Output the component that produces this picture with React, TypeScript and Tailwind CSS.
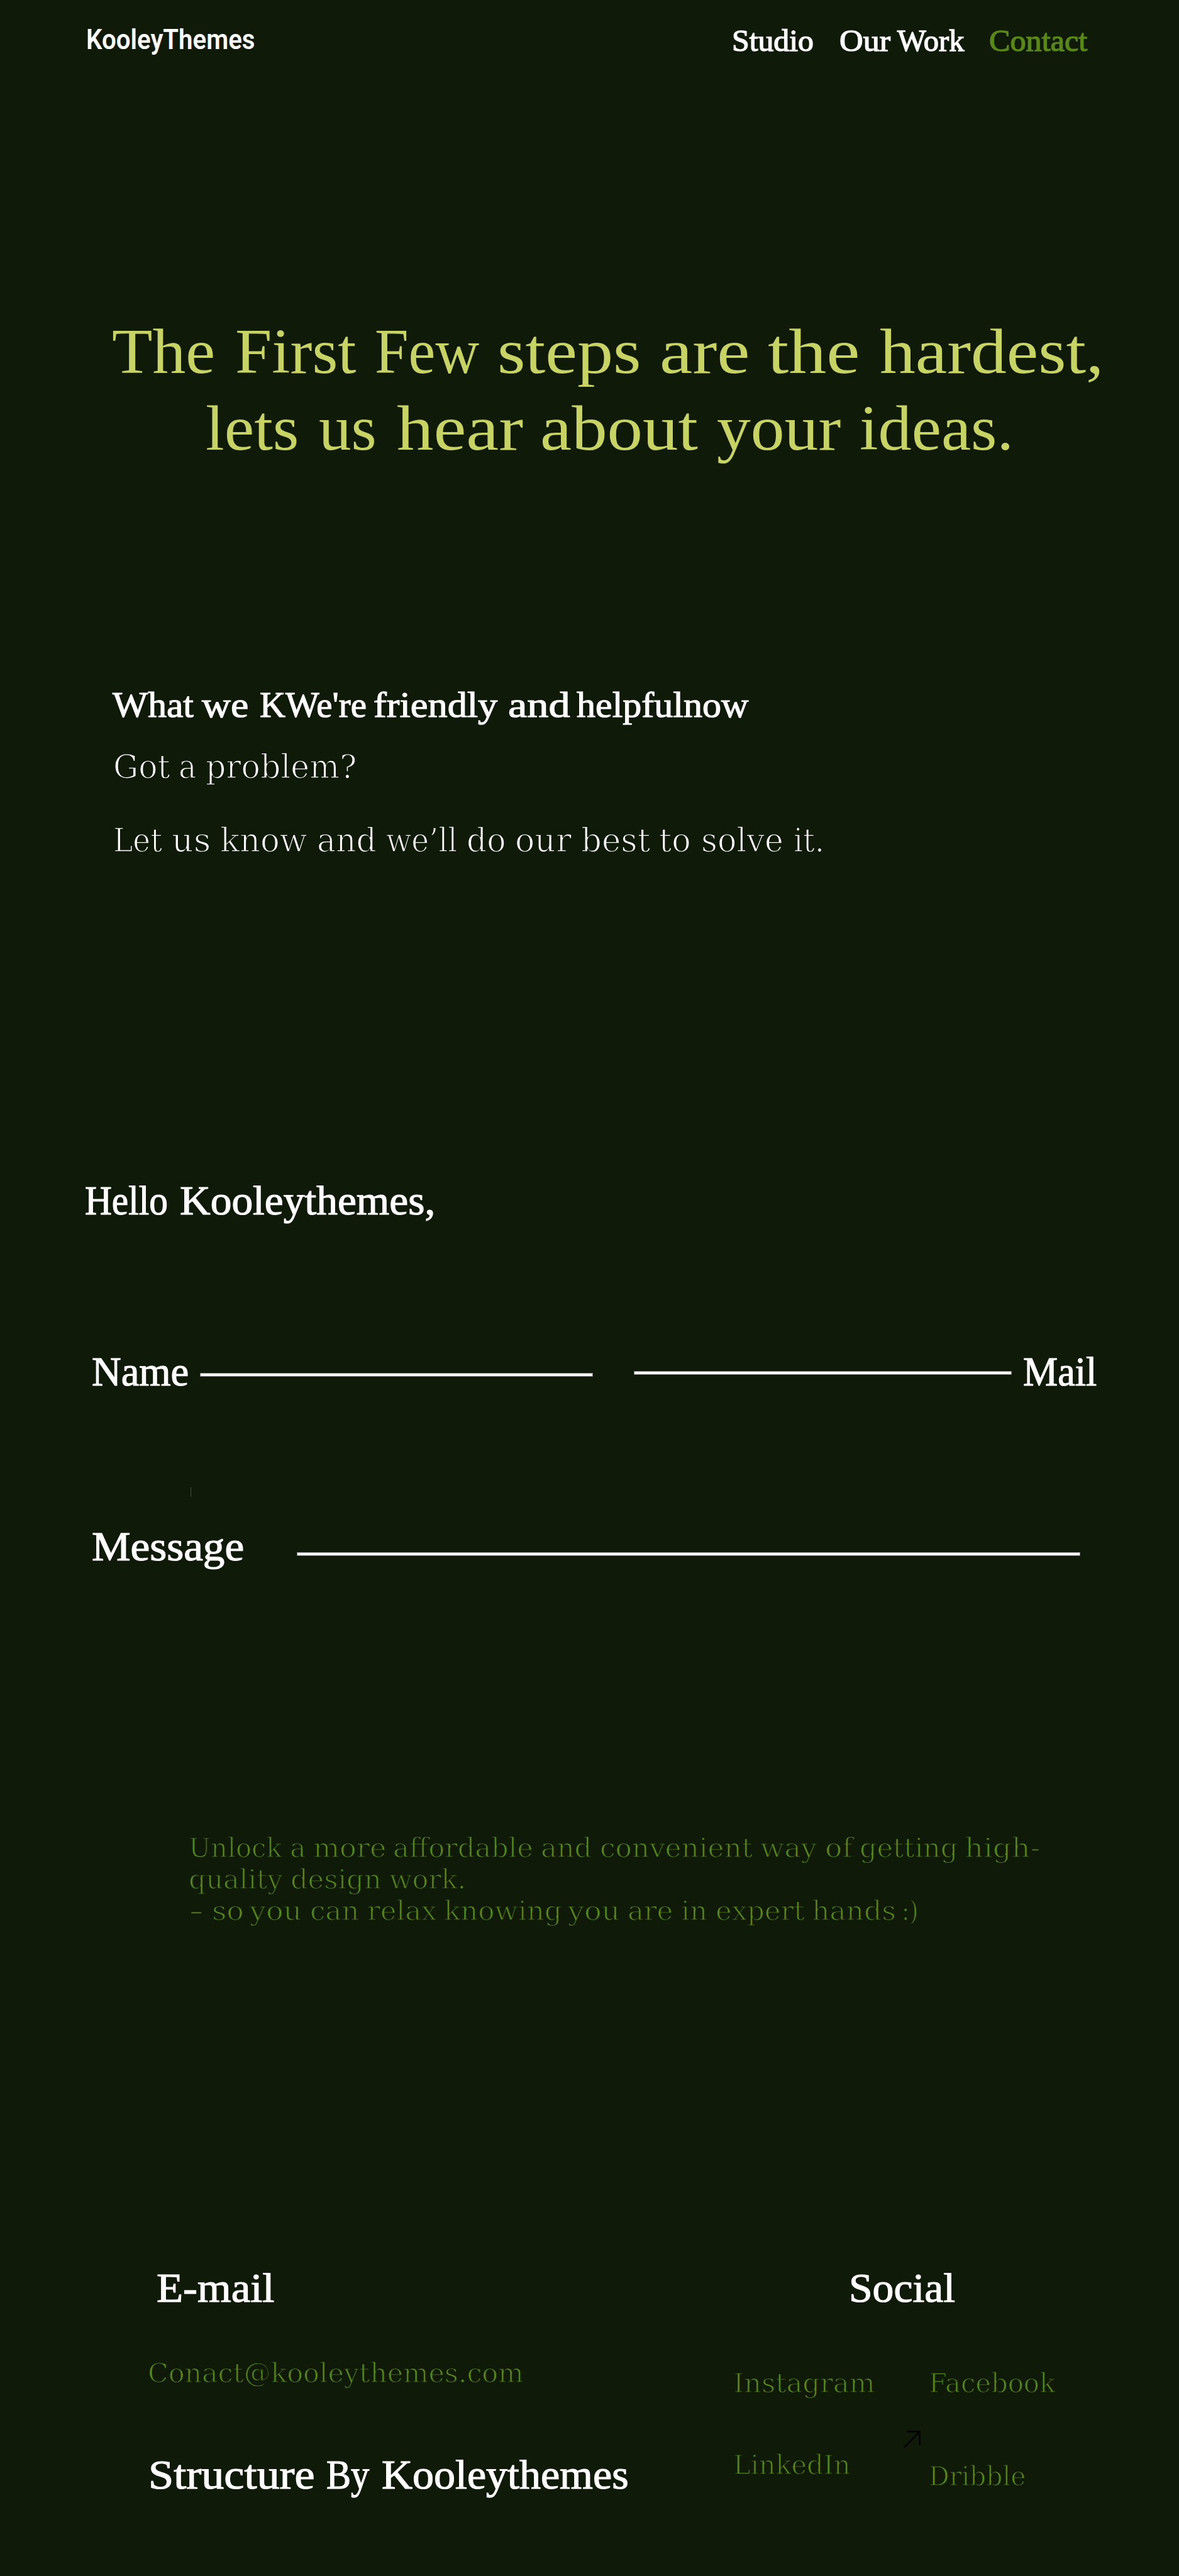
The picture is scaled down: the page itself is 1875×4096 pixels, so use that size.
import { Fragment, useLayoutEffect, useRef, useState } from "react";

/** A word stretched horizontally so that it fills the width of its box. */
function Fit({ text, width }: { text: string; width?: number }) {
  const box = useRef<HTMLSpanElement>(null);
  const inner = useRef<HTMLSpanElement>(null);
  const [scale, setScale] = useState(1);

  useLayoutEffect(() => {
    if (!box.current || !inner.current) return;
    const target = box.current.getBoundingClientRect().width;
    const natural = inner.current.getBoundingClientRect().width;
    if (natural > 0) setScale((s) => (target / natural) * s);
  }, [text, width]);

  return (
    <span
      ref={box}
      className="block w-full shrink-0"
      style={width ? { width } : undefined}
    >
      <span
        ref={inner}
        className="inline-block origin-left"
        style={{ transform: `scaleX(${scale})` }}
      >
        {text}
      </span>
    </span>
  );
}

/**
 * One line of text. `stops` lists the left and right edge of every word;
 * without it the whole line fills the width given by its class.
 */
function Line({
  text,
  className,
  stops,
}: {
  text: string;
  className: string;
  stops?: number[];
}) {
  if (!stops) {
    return (
      <span className={`block shrink-0 whitespace-nowrap ${className}`}>
        <Fit text={text} />
      </span>
    );
  }
  const words = text.split(" ");
  return (
    <span className={`flex shrink-0 whitespace-nowrap ${className}`}>
      {words.map((word, i) => (
        <Fragment key={i}>
          {i > 0 && (
            <span
              className="shrink-0"
              style={{ width: stops[i * 2] - stops[i * 2 - 1] - 2 }}
            >
              {" "}
            </span>
          )}
          <Fit text={word} width={stops[i * 2 + 1] - stops[i * 2] + 2} />
        </Fragment>
      ))}
    </span>
  );
}

const display = "font-['Liberation_Serif',serif]";
const nav = `${display} text-[50px] leading-[60px] [-webkit-text-stroke:1.4px_currentColor]`;
const title = `${display} text-[67px] leading-[80px] text-white [-webkit-text-stroke:1.2px_currentColor]`;
const slab = "font-['DejaVu_Serif',serif]";
const thin = "[-webkit-text-stroke:1.35px_#0f1a08]";
const link = `${slab} ${thin} text-[44px] leading-[60px] text-[#598817]`;
const rule = "h-[6.2px] shrink-0 border border-[#777] bg-white";

export default function App() {
  return (
    <div className="h-[4096px] w-full overflow-hidden bg-[#0f1a08]">
      <div className="w-[1920px] [zoom:0.9765625]">
        <header className="flex h-[100px] items-start pt-[35px] pl-[140px]">
          <Line
            text="KooleyThemes"
            className="w-[275px] font-['Roboto',sans-serif] text-[45px] leading-[60px] font-semibold text-white"
          />
          <nav className="mt-[2px] ml-[777px] flex gap-[42px]">
            <Line text="Studio" className={`${nav} w-[133px] text-white`} />
            <Line
              text="Our Work"
              stops={[1366, 1447, 1460, 1567]}
              className={`${nav} w-[202px] text-white`}
            />
            <Line text="Contact" className={`${nav} w-[160px] text-[#598817]`} />
          </nav>
        </header>

        <main>
          <h1
            className={`${display} pt-[410px] text-[104px] leading-[125px] text-[#c7d363]`}
          >
            <Line
              text="The First Few steps are the hardest,"
              stops={[
                183, 349, 384, 579, 611, 779, 811, 1043, 1075, 1220, 1251,
                1399, 1434, 1797,
              ]}
              className="ml-[182px]"
            />
            <Line
              text="lets us hear about your ideas."
              stops={[
                336, 486, 520, 612, 647, 851, 881, 1136, 1168, 1368, 1401,
                1650,
              ]}
              className="ml-[335px]"
            />
          </h1>

          <section className="mt-[352px] pl-[183px] text-white">
            <Line
              text="What we KWe're friendly and helpfulnow"
              stops={[
                183, 313, 329, 403, 423, 595, 608, 808, 827, 926, 939, 1217,
              ]}
              className={`${display} text-[59px] leading-[72px] [-webkit-text-stroke:1.2px_currentColor]`}
            />
            <div
              className={`${slab} mt-[5px] text-[53px] leading-[120px] [-webkit-text-stroke:1.6px_#0f1a08]`}
            >
              <Line
                text="Got a problem?"
                stops={[185, 276, 292, 319, 336, 580]}
                className="ml-px"
              />
              <Line
                text="Let us know and we’ll do our best to solve it."
                stops={[
                  185, 263, 281, 343, 359, 499, 517, 612, 630, 744, 761, 823,
                  840, 930, 947, 1058, 1074, 1124, 1143, 1275, 1293, 1341,
                ]}
                className="ml-px"
              />
            </div>
          </section>

          <section className="mt-[486px]">
            <Line
              text="Hello Kooleythemes,"
              stops={[139, 272, 294, 708]}
              className={`${title} ml-[138px]`}
            />
            <div className="mt-[198px] flex items-start pl-[150px]">
              <Line text="Name" className={`${title} w-[158px]`} />
              <div className={`${rule} mt-[42px] ml-[18px] w-[640px]`} />
              <div className={`${rule} mt-[39px] ml-[66px] w-[616px]`} />
              <Line text="Mail" className={`${title} ml-[18px] w-[120px]`} />
            </div>
            <div className="mt-[149px] ml-[310px] h-[15px] w-[1.1px] bg-[#4a4f46]" />
            <div className="mt-[41px] flex items-start pl-[149px]">
              <Line text="Message" className={`${title} w-[248px]`} />
              <div className={`${rule} mt-[49px] ml-[86px] w-[1276px]`} />
            </div>
          </section>

          <section
            className={`${slab} ${thin} mt-[426px] pl-[307px] text-[44px] leading-[51px] text-[#598817]`}
          >
            <Line
              text="Unlock a more affordable and convenient way of getting high-"
              stops={[
                308, 458, 473, 497, 511, 628, 641, 867, 882, 963, 978, 1225,
                1239, 1329, 1345, 1388, 1401, 1559, 1572, 1693,
              ]}
              className=""
            />
            <Line
              text="quality design work."
              stops={[308, 459, 474, 620, 635, 758]}
              className=""
            />
            <Line
              text="- so you can relax knowing you are in expert hands :)"
              stops={[
                308, 331, 346, 396, 408, 491, 506, 584, 599, 710, 724, 914,
                926, 1009, 1023, 1095, 1110, 1151, 1166, 1309, 1323, 1458,
                1470, 1495,
              ]}
              className=""
            />
          </section>
        </main>

        <footer className="mt-[548px] flex items-start pl-[242px]">
          <div className="w-[952px]">
            <Line text="E-mail" className={`${title} ml-[13px] w-[192px]`} />
            <Line
              text="Conact@kooleythemes.com"
              className={`${link} mt-[69px] -ml-px w-[612px]`}
            />
            <Line
              text="Structure By Kooleythemes"
              stops={[242, 511, 531, 599, 622, 1022]}
              className={`${title} mt-[95px]`}
            />
          </div>
          <div>
            <Line text="Social" className={`${title} ml-[188px] w-[173px]`} />
            <div className="mt-[85px] flex items-start">
              <div className="flex flex-col gap-[73px]">
                <Line text="Instagram" className={`${link} w-[231px]`} />
                <Line text="LinkedIn" className={`${link} w-[191px]`} />
              </div>
              <svg
                viewBox="0 0 28 28"
                className="mt-[108px] ml-[46px] h-[28px] w-[28px]"
                fill="none"
                stroke="#000"
                strokeWidth="2.8"
                strokeLinecap="round"
              >
                <path d="M1.5 26.5 26 1.7M6.5 1.5H26.4V22.5" />
              </svg>
              <div className="ml-[13px] flex flex-col gap-[92px]">
                <Line text="Facebook" className={`${link} w-[206px]`} />
                <Line text="Dribble" className={`${link} w-[158px]`} />
              </div>
            </div>
          </div>
        </footer>
      </div>
    </div>
  );
}
